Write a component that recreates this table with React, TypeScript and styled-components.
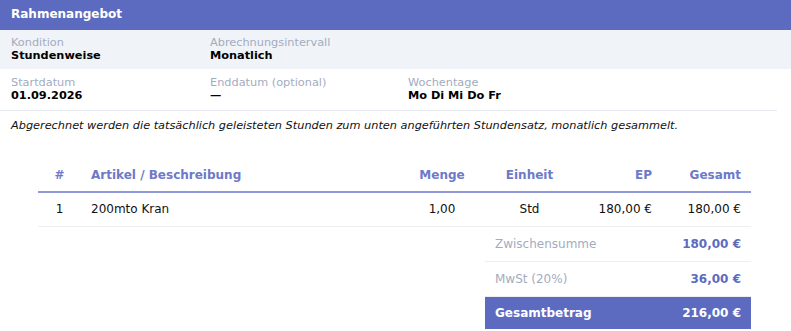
import React, { FC } from "react";
import styled, { createGlobalStyle } from "styled-components";

//styles
const GlobalStyle = createGlobalStyle`
    body {
        margin: 0;
        background: #ffffff;
        font-family: "DejaVu Sans", "Noto Sans", sans-serif;
        font-size: 11.3px;
        color: #111111;
    }
`
const Page = styled.div`
    width: 791px;
`
const HeaderBar = styled.div`
    background: #5c6bc0;
    color: #ffffff;
    font-size: 12px;
    font-weight: bold;
    line-height: 14px;
    padding: 7px 11px 9px;
`
const InfoRow = styled.div<{ $shaded?: boolean }>`
    display: grid;
    grid-template-columns: 199px 198px 1fr;
    padding: ${(p) => (p.$shaded ? "6px 11px 7px" : "7px 11px 8px")};
    background: ${(p) => (p.$shaded ? "#f0f3f8" : "transparent")};
    border-bottom: ${(p) => (p.$shaded ? "none" : "1px solid #e6e9ef")};
    margin-right: ${(p) => (p.$shaded ? "0" : "14px")};
`
const Field = styled.div`
    display: flex;
    flex-direction: column;
    line-height: 13px;
`
const Label = styled.span`
    color: #a3acbf;
`
const Value = styled.span`
    font-weight: bold;
    color: #000000;
`
const Note = styled.p`
    margin: 8px 11px 0;
    font-style: italic;
    line-height: 13px;
    color: #111111;
`
const TableWrap = styled.div`
    margin: 28px 40px 0 38px;
    font-size: 12px;
`
const ItemTable = styled.table`
    width: 713px;
    border-collapse: collapse;
    table-layout: fixed;
    line-height: 14px;
    font-size: 12px;
`
const Th = styled.th<{ $align: string }>`
    padding: 8px 10px 9px;
    text-align: ${(p) => p.$align};
    color: #6d79c9;
    font-weight: bold;
    border-bottom: 2px solid #8f98d8;
`
const Td = styled.td<{ $align: string }>`
    padding: 9px 10px 10px;
    text-align: ${(p) => p.$align};
    color: #111111;
    border-bottom: 1px solid #eceef2;
`
const Totals = styled.div`
    display: flex;
    flex-direction: column;
    width: 266px;
    margin-left: auto;
`
const TotalRow = styled.div<{ $grand?: boolean }>`
    display: flex;
    justify-content: space-between;
    line-height: 14px;
    padding: ${(p) => (p.$grand ? "9px 10px 9px" : "10px 10px 10px")};
    background: ${(p) => (p.$grand ? "#5c6bc0" : "transparent")};
    border-bottom: ${(p) => (p.$grand ? "none" : "1px solid #eceef2")};
`
const TotalLabel = styled.span<{ $grand?: boolean }>`
    color: ${(p) => (p.$grand ? "#ffffff" : "#a3acbf")};
    font-weight: ${(p) => (p.$grand ? "bold" : "normal")};
`
const TotalValue = styled.span<{ $grand?: boolean }>`
    color: ${(p) => (p.$grand ? "#ffffff" : "#5c6bc0")};
    font-weight: bold;
`

interface Column {
    title: string;
    width: number;
    align: string;
}

const columns: Column[] = [
    { title: "#", width: 43, align: "center" },
    { title: "Artikel / Beschreibung", width: 317, align: "left" },
    { title: "Menge", width: 88, align: "center" },
    { title: "Einheit", width: 87, align: "center" },
    { title: "EP", width: 89, align: "right" },
    { title: "Gesamt", width: 89, align: "right" },
];

const rows = [["1", "200mto Kran", "1,00", "Std", "180,00 €", "180,00 €"]];

const totals = [
    { label: "Zwischensumme", value: "180,00 €" },
    { label: "MwSt (20%)", value: "36,00 €" },
];

const App: FC = () => {
    return (
        <Page>
            <GlobalStyle />
            <HeaderBar>Rahmenangebot</HeaderBar>
            <InfoRow $shaded>
                <Field>
                    <Label>Kondition</Label>
                    <Value>Stundenweise</Value>
                </Field>
                <Field>
                    <Label>Abrechnungsintervall</Label>
                    <Value>Monatlich</Value>
                </Field>
            </InfoRow>
            <InfoRow>
                <Field>
                    <Label>Startdatum</Label>
                    <Value>01.09.2026</Value>
                </Field>
                <Field>
                    <Label>Enddatum (optional)</Label>
                    <Value>—</Value>
                </Field>
                <Field>
                    <Label>Wochentage</Label>
                    <Value>Mo Di Mi Do Fr</Value>
                </Field>
            </InfoRow>
            <Note>
                Abgerechnet werden die tatsächlich geleisteten Stunden zum unten angeführten Stundensatz, monatlich gesammelt.
            </Note>
            <TableWrap>
                <ItemTable>
                    <colgroup>
                        {columns.map((c) => (
                            <col key={c.title} style={{ width: c.width }} />
                        ))}
                    </colgroup>
                    <thead>
                        <tr>
                            {columns.map((c) => (
                                <Th key={c.title} $align={c.align}>{c.title}</Th>
                            ))}
                        </tr>
                    </thead>
                    <tbody>
                        {rows.map((r, i) => (
                            <tr key={i}>
                                {r.map((cell, j) => (
                                    <Td key={j} $align={columns[j].align}>{cell}</Td>
                                ))}
                            </tr>
                        ))}
                    </tbody>
                </ItemTable>
                <Totals>
                    {totals.map((t) => (
                        <TotalRow key={t.label}>
                            <TotalLabel>{t.label}</TotalLabel>
                            <TotalValue>{t.value}</TotalValue>
                        </TotalRow>
                    ))}
                    <TotalRow $grand>
                        <TotalLabel $grand>Gesamtbetrag</TotalLabel>
                        <TotalValue $grand>216,00 €</TotalValue>
                    </TotalRow>
                </Totals>
            </TableWrap>
        </Page>
    );
}

export default App;
